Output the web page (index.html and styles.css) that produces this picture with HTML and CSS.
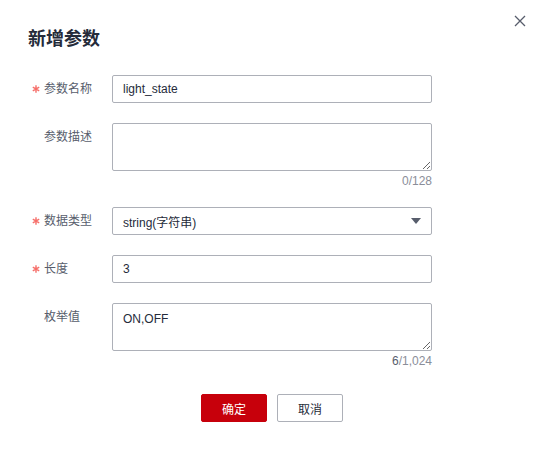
FILE: index.html
```html
<!DOCTYPE html>
<html lang="zh-CN">
<head>
<meta charset="utf-8">
<title>新增参数</title>
<link rel="stylesheet" href="styles.css">
</head>
<body>
<div class="dialog">
  <button class="close" type="button" aria-label="关闭">
    <svg width="12" height="12" viewBox="0 0 12 12"><path d="M1 1 L11 11 M11 1 L1 11" stroke="#575d6c" stroke-width="1.3" fill="none"/></svg>
  </button>
  <h2 class="title">新增参数</h2>
  <div class="form">
    <div class="row">
      <div class="label"><span class="star"><svg width="8" height="8" viewBox="0 0 8 8"><path d="M4 0.3 V7.7 M0.8 2.2 L7.2 5.8 M7.2 2.2 L0.8 5.8" stroke="#f66f6a" stroke-width="1.4"/></svg></span><span>参数名称</span></div>
      <div class="field"><input class="input" type="text" value="light_state"></div>
    </div>
    <div class="row row-count">
      <div class="label"><span class="star"></span><span>参数描述</span></div>
      <div class="field">
        <textarea class="input textarea"></textarea>
        <div class="count">0/128</div>
      </div>
    </div>
    <div class="row">
      <div class="label"><span class="star"><svg width="8" height="8" viewBox="0 0 8 8"><path d="M4 0.3 V7.7 M0.8 2.2 L7.2 5.8 M7.2 2.2 L0.8 5.8" stroke="#f66f6a" stroke-width="1.4"/></svg></span><span>数据类型</span></div>
      <div class="field">
        <div class="input select"><span>string(字符串)</span>
          <svg width="10" height="6" viewBox="0 0 10 6"><path d="M0 0 H10 L5 6 Z" fill="#575d6c"/></svg>
        </div>
      </div>
    </div>
    <div class="row">
      <div class="label"><span class="star"><svg width="8" height="8" viewBox="0 0 8 8"><path d="M4 0.3 V7.7 M0.8 2.2 L7.2 5.8 M7.2 2.2 L0.8 5.8" stroke="#f66f6a" stroke-width="1.4"/></svg></span><span>长度</span></div>
      <div class="field"><input class="input" type="text" value="3"></div>
    </div>
    <div class="row row-count">
      <div class="label"><span class="star"></span><span>枚举值</span></div>
      <div class="field">
        <textarea class="input textarea">ON,OFF</textarea>
        <div class="count"><span class="count-cur">6</span>/1,024</div>
      </div>
    </div>
  </div>
  <div class="footer">
    <button class="btn btn-primary" type="button">确定</button>
    <button class="btn btn-default" type="button">取消</button>
  </div>
</div>
</body>
</html>
```
FILE: styles.css
```css
html, body {
  margin: 0;
  padding: 0;
  background: #ffffff;
}
body {
  font-family: "Liberation Sans", "Noto Sans CJK SC", sans-serif;
  color: #252b3a;
}
.dialog {
  position: relative;
  width: 544px;
  height: 452px;
  box-sizing: border-box;
  background: #ffffff;
}
.close {
  position: absolute;
  top: 15px;
  right: 18px;
  width: 12px;
  height: 12px;
  padding: 0;
  border: 0;
  background: transparent;
  display: flex;
}
.title {
  margin: 0;
  padding: 27px 28px 0;
  font-size: 18px;
  line-height: 24px;
  font-weight: bold;
  color: #252b3a;
}
.form {
  margin-top: 24px;
}
.row {
  display: flex;
  padding-left: 28px;
  margin-bottom: 20px;
}
.row-count {
  margin-bottom: 18px;
}
.label {
  width: 84px;
  height: 28px;
  display: flex;
  align-items: center;
  font-size: 12px;
  line-height: 28px;
  color: #575d6c;
}
.star {
  width: 16px;
  height: 28px;
  flex: none;
  display: flex;
  align-items: center;
  justify-content: center;
}
.field {
  width: 320px;
}
.input {
  display: block;
  box-sizing: border-box;
  width: 100%;
  height: 28px;
  margin: 0;
  border: 1px solid #adb0b8;
  border-radius: 2px;
  padding: 0 10px;
  font-family: "Liberation Sans", "Noto Sans CJK SC", sans-serif;
  font-size: 12px;
  color: #252b3a;
  background: #ffffff;
  outline: none;
}
.textarea {
  height: 48px;
  padding: 6px 10px;
  line-height: 18px;
  resize: vertical;
}
.select {
  display: flex;
  align-items: center;
  justify-content: space-between;
  padding-right: 10px;
}
.count {
  margin-top: 2px;
  text-align: right;
  font-size: 12px;
  line-height: 16px;
  color: #8a8e99;
}
.count-cur {
  color: #575d6c;
}
.footer {
  display: flex;
  justify-content: center;
  gap: 10px;
  margin-top: 25px;
}
.btn {
  box-sizing: border-box;
  width: 66px;
  height: 28px;
  border-radius: 2px;
  font-family: "Liberation Sans", "Noto Sans CJK SC", sans-serif;
  font-size: 12px;
  padding: 0;
}
.btn-primary {
  background: #c7000b;
  border: 1px solid #c7000b;
  color: #ffffff;
}
.btn-default {
  background: #ffffff;
  border: 1px solid #adb0b8;
  color: #252b3a;
}
```
